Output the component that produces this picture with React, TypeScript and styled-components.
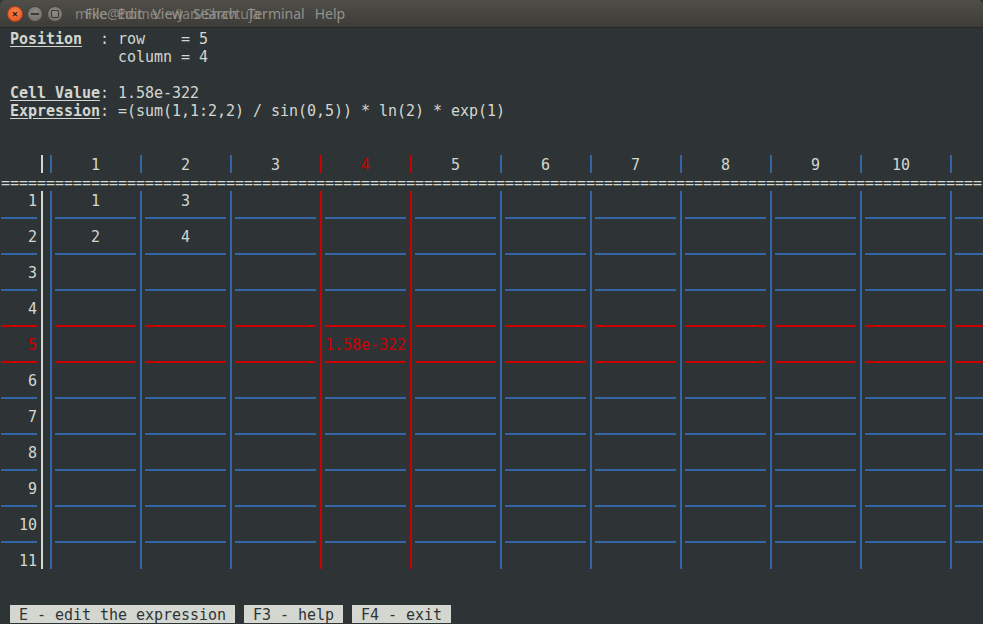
import React from "react";
import styled, { createGlobalStyle } from "styled-components";

const BG = "#2e3436";
const FG = "#d3d7cf";
const BLUE = "#3465a4";
const RED = "#cc0000";

const CHAR = 9;
const LINE = 18;
// glyphs sit a little lower in the cell than the browser centres them
const TEXT_LH = 21;

const GlobalStyle = createGlobalStyle`
    html, body {
        margin: 0;
        padding: 0;
        background: ${BG};
    }
`;

const Window = styled.div`
    width: 983px;
    height: 624px;
    overflow: hidden;
    display: flex;
    flex-direction: column;
    background: ${BG};
`;

const TitleBar = styled.div`
    position: relative;
    height: 28px;
    flex: none;
    display: flex;
    align-items: center;
    gap: 4px;
    padding-left: 7px;
    background: linear-gradient(#4f4e49, #3d3c38);
    border-radius: 5px 5px 0 0;
    border-bottom: 1px solid #262624;
    box-sizing: border-box;
    font-family: "Noto Sans", "Open Sans", sans-serif;
    font-size: 14px;
`;

const WinButton = styled.div<{ $close?: boolean }>`
    width: 16px;
    height: 16px;
    border-radius: 50%;
    box-sizing: border-box;
    border: 1px solid ${(p) => (p.$close ? "#b83f16" : "#44433f")};
    background: ${(p) =>
        p.$close
            ? "radial-gradient(circle at 50% 35%, #f6824f, #e2521d)"
            : "radial-gradient(circle at 50% 35%, #8c8b86, #6b6a65)"};
    display: flex;
    align-items: center;
    justify-content: center;
    color: ${(p) => (p.$close ? "#3a1a0c" : "#3a3935")};
    font-size: 11px;
    font-weight: bold;
    line-height: 1;
`;

const MinGlyph = styled.span`
    width: 8px;
    height: 2px;
    background: #3a3935;
`;

const MaxGlyph = styled.span`
    width: 6px;
    height: 6px;
    border: 1.5px solid #3a3935;
    border-radius: 1px;
`;

const TitleOverlay = styled.div`
    position: absolute;
    left: 75px;
    top: 0;
    height: 27px;
    display: flex;
    align-items: center;
    color: #85837d;
    white-space: nowrap;
`;

const Menu = styled.div`
    position: absolute;
    left: 85px;
    top: 0;
    height: 27px;
    display: flex;
    align-items: center;
    gap: 10px;
    color: #94928b;
    white-space: nowrap;
`;

const Terminal = styled.div`
    flex: 1;
    padding-top: 1px;
    padding-left: 1px;
    font-family: "DejaVu Sans Mono", "Liberation Mono", monospace;
    font-size: 15px;
    letter-spacing: -0.03px;
    color: ${FG};
`;

const Line = styled.div<{ $clip?: boolean }>`
    height: ${LINE}px;
    line-height: ${TEXT_LH}px;
    white-space: pre;
    overflow: ${(p) => (p.$clip ? "hidden" : "visible")};
`;

const Label = styled.span`
    font-weight: bold;
    text-decoration: underline;
    text-underline-offset: 2px;
`;

const Row = styled.div`
    display: flex;
    height: ${LINE}px;
    line-height: ${TEXT_LH}px;
    white-space: pre;
`;

const NumCell = styled.div<{ $color?: string }>`
    width: ${CHAR * 4}px;
    flex: none;
    text-align: right;
    color: ${(p) => p.$color || FG};
`;

const Bar = styled.div<{ $color: string }>`
    width: ${CHAR}px;
    flex: none;
    position: relative;
    &::before {
        content: "";
        position: absolute;
        top: 0;
        bottom: 0;
        left: 4px;
        width: 2px;
        background: ${(p) => p.$color};
    }
`;

const Cell = styled.div<{ $color?: string; $last?: boolean }>`
    width: ${CHAR * 9}px;
    flex: ${(p) => (p.$last ? "1" : "none")};
    color: ${(p) => p.$color || FG};
`;

const Rule = styled.div<{ $color: string; $w?: number; $last?: boolean }>`
    width: ${(p) => p.$w ?? CHAR * 9}px;
    flex: ${(p) => (p.$last ? "1" : "none")};
    position: relative;
    &::before {
        content: "";
        position: absolute;
        left: 0;
        right: 0;
        top: 8px;
        height: 2px;
        background: ${(p) => p.$color};
    }
`;

const Footer = styled.div`
    display: flex;
    gap: ${CHAR}px;
    padding-left: ${CHAR}px;
    height: ${LINE}px;
    white-space: pre;
`;

const Key = styled.span`
    height: ${LINE}px;
    line-height: ${TEXT_LH}px;
    overflow: hidden;
    background: ${FG};
    color: ${BG};
`;

const COLS = [1, 2, 3, 4, 5, 6, 7, 8, 9, 10, 11];
const SEL_COL = 4;
const SEL_ROW = 5;
const ROWS = [1, 2, 3, 4, 5, 6, 7, 8, 9, 10, 11];

const values: Record<string, string> = {
    "1:1": "1",
    "2:1": "2",
    "1:2": "3",
    "2:2": "4",
    "5:4": "1.58e-322",
};

const centered = (s: string) => " ".repeat(Math.floor((9 - s.length) / 2)) + s;

const barColor = (c: number) => (c === SEL_COL || c === SEL_COL + 1 ? RED : BLUE);

const HeaderRow = () => (
    <Row>
        <NumCell />
        <Bar $color={FG} />
        {COLS.map((c) => (
            <React.Fragment key={c}>
                <Bar $color={barColor(c)} />
                <Cell $last={c === 11} $color={c === SEL_COL ? RED : undefined}>
                    {c < 11 ? centered(String(c)) : ""}
                </Cell>
            </React.Fragment>
        ))}
    </Row>
);

const ValueRow = ({ r }: { r: number }) => (
    <Row>
        <NumCell $color={r === SEL_ROW ? RED : undefined}>{String(r)}</NumCell>
        <Bar $color={FG} />
        {COLS.map((c) => {
            const v = values[`${r}:${c}`] || "";
            const sel = r === SEL_ROW && c === SEL_COL;
            return (
                <React.Fragment key={c}>
                    <Bar $color={barColor(c)} />
                    <Cell $last={c === 11} $color={sel ? RED : undefined}>
                        {centered(v).trimEnd()}
                    </Cell>
                </React.Fragment>
            );
        })}
    </Row>
);

const RuleRow = ({ r }: { r: number }) => {
    const color = r === SEL_ROW || r === SEL_ROW - 1 ? RED : BLUE;
    return (
        <Row>
            <Rule $color={color} $w={CHAR * 4} />
            <Bar $color={FG} />
            {COLS.map((c) => (
                <React.Fragment key={c}>
                    <Bar $color={barColor(c)} />
                    <Rule $color={color} $last={c === 11} />
                </React.Fragment>
            ))}
        </Row>
    );
};

export default function App() {
    return (
        <Window>
            <GlobalStyle />
            <TitleBar>
                <WinButton $close>×</WinButton>
                <WinButton>
                    <MinGlyph />
                </WinButton>
                <WinButton>
                    <MaxGlyph />
                </WinButton>
                <TitleOverlay>mike@home: ~/Jan/Shavtuja</TitleOverlay>
                <Menu>
                    <span>File</span>
                    <span>Edit</span>
                    <span>View</span>
                    <span>Search</span>
                    <span>Terminal</span>
                    <span>Help</span>
                </Menu>
            </TitleBar>
            <Terminal>
                <Line>
                    {" "}
                    <Label>Position</Label>
                    {"  : row    = 5"}
                </Line>
                <Line>{"             column = 4"}</Line>
                <Line />
                <Line>
                    {" "}
                    <Label>Cell Value</Label>
                    {": 1.58e-322"}
                </Line>
                <Line>
                    {" "}
                    <Label>Expression</Label>
                    {": =(sum(1,1:2,2) / sin(0,5)) * ln(2) * exp(1)"}
                </Line>
                <Line />
                <Line />
                <HeaderRow />
                <Line $clip>{"=".repeat(109)}</Line>
                {ROWS.map((r) => (
                    <React.Fragment key={r}>
                        <ValueRow r={r} />
                        {r < 11 && <RuleRow r={r} />}
                    </React.Fragment>
                ))}
                <Line />
                <Line />
                <Footer>
                    <Key>{" E - edit the expression "}</Key>
                    <Key>{" F3 - help "}</Key>
                    <Key>{" F4 - exit "}</Key>
                </Footer>
            </Terminal>
        </Window>
    );
}
